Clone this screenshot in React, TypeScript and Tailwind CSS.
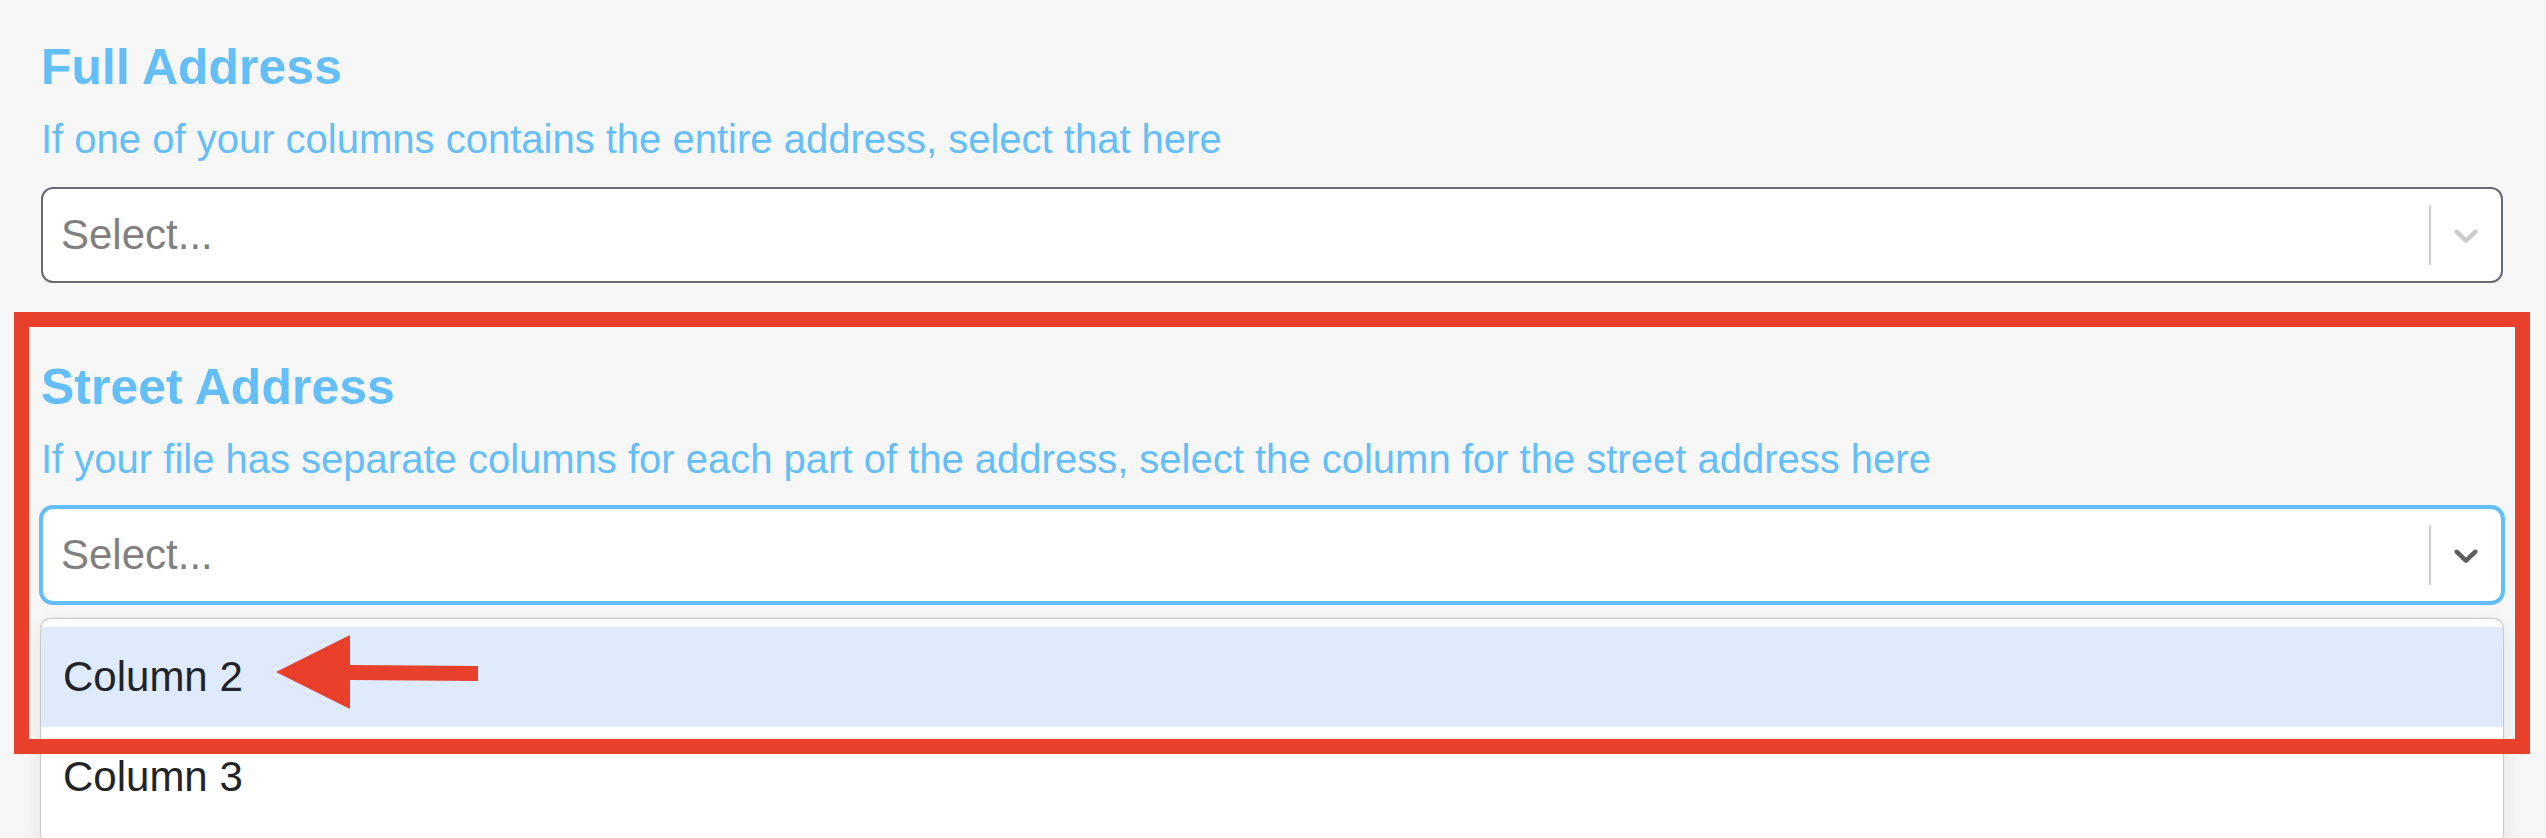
import React from "react";

const FONT = { fontFamily: '"Liberation Sans", Arial, Helvetica, sans-serif' };

function Chevron({ color }: { color: string }) {
  return (
    <svg width="40" height="40" viewBox="0 0 20 20" aria-hidden="true" focusable="false">
      <path
        fill={color}
        d="M4.516 7.548c0.436-0.446 1.043-0.481 1.576 0l3.908 3.747 3.908-3.747c0.533-0.481 1.141-0.446 1.574 0 0.436 0.445 0.408 1.197 0 1.615-0.406 0.418-4.695 4.502-4.695 4.502-0.217 0.223-0.502 0.335-0.787 0.335s-0.57-0.112-0.789-0.335c0 0-4.287-4.084-4.695-4.502s-0.436-1.17 0-1.615z"
      />
    </svg>
  );
}

function SelectBox({ focused }: { focused?: boolean }) {
  return (
    <div
      className={
        focused
          ? "flex h-[96px] items-center rounded-[12px] border-2 border-[#63bef9] bg-white shadow-[0_0_0_2px_#63bef9]"
          : "flex h-[96px] items-center rounded-[12px] border-2 border-[#676b74] bg-white"
      }
    >
      <div className="flex-1 pl-[18px] text-[42px] leading-[50px] text-[#808080]">Select...</div>
      <div className="h-[60px] w-[2px] bg-[#cccccc]" />
      <div className="flex items-center px-[15px]">
        <Chevron color={focused ? "#5f5f5f" : "#cccccc"} />
      </div>
    </div>
  );
}

function Field({
  title,
  hint,
  focused,
  options,
  className,
}: {
  title: string;
  hint: string;
  focused?: boolean;
  options?: string[];
  className?: string;
}) {
  return (
    <section className={"flex flex-col " + (className ?? "")}>
      <h2 className="text-[50px] font-bold leading-[60px] text-[#63bef9]">{title}</h2>
      <p className="mt-[18px] text-[40px] leading-[48px] text-[#63bef9]">{hint}</p>
      <div className="relative mt-[24px]">
        <SelectBox focused={focused} />
        {options && (
          <div className="absolute left-0 right-0 top-[calc(100%+16px)] z-10 rounded-[10px] bg-white pb-[16px] pt-[8px] shadow-[0_0_0_1px_rgba(0,0,0,0.1),0_-1px_0_1px_rgba(0,0,0,0.05),0_8px_22px_rgba(0,0,0,0.1)]">
            {options.map((o, i) => (
              <div
                key={o}
                className={
                  "flex h-[100px] items-center pl-[22px] text-[42px] leading-[50px] text-[#222428] " +
                  (i === 0 ? "bg-[#dfeafc]" : "bg-white")
                }
              >
                {o}
              </div>
            ))}
          </div>
        )}
      </div>
    </section>
  );
}

export default function App() {
  return (
    <div className="relative h-[838px] overflow-hidden bg-[#f7f7f7] pl-[41px] pr-[43px] pt-[37px]" style={FONT}>
      <Field title="Full Address" hint="If one of your columns contains the entire address, select that here" />
      <Field
        className="mt-[74px]"
        title="Street Address"
        hint="If your file has separate columns for each part of the address, select the column for the street address here"
        focused
        options={["Column 2", "Column 3"]}
      />

      {/* highlight frame around the street address field */}
      <div className="pointer-events-none absolute left-[14px] top-[312px] z-20 h-[442px] w-[2516px] border-[15px] border-[#e8402a]" />

      {/* pointer arrow toward the first option */}
      <svg
        className="pointer-events-none absolute left-[270px] top-[630px] z-20"
        width="215"
        height="85"
        viewBox="0 0 215 85"
        aria-hidden="true"
      >
        <polygon fill="#e8402a" points="6,42 80,5 80,35 208,36 208,51 80,50 80,79" />
      </svg>
    </div>
  );
}
